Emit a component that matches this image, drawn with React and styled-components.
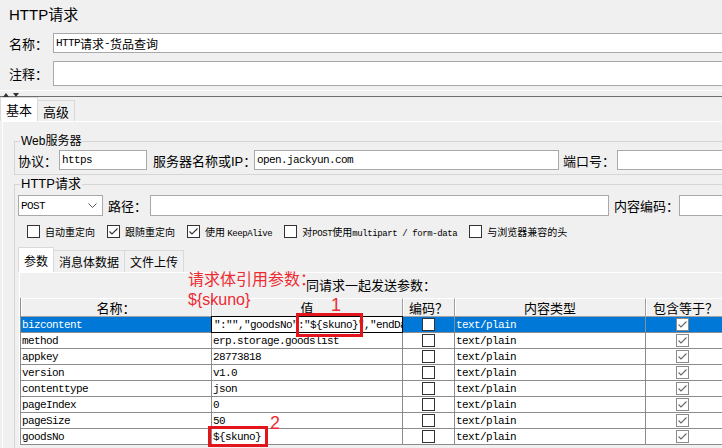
import React from "react";
import styled, { createGlobalStyle } from "styled-components";

const UI = `"Liberation Sans", "Noto Sans CJK SC", sans-serif`;
const MONO = `"Liberation Mono", "Noto Sans CJK SC", monospace`;

const GlobalStyle = createGlobalStyle`
  html, body { margin: 0; padding: 0; background: #f0f0f0; }
  * { box-sizing: border-box; }
`;

const params = [
  { name: "bizcontent", value: '":"","goodsNo":"${skuno}","endDa', selected: true },
  { name: "method", value: "erp.storage.goodslist" },
  { name: "appkey", value: "28773818" },
  { name: "version", value: "v1.0" },
  { name: "contenttype", value: "json" },
  { name: "pageIndex", value: "0" },
  { name: "pageSize", value: "50" },
  { name: "goodsNo", value: "${skuno}" },
];

function CheckBox({ checked, $muted }) {
  return (
    <Box $muted={$muted}>
      {checked && (
        <svg width="11" height="11" viewBox="0 0 11 11">
          <polyline points="1.5,5.5 4,8 9.5,2.5" fill="none" stroke="currentColor" strokeWidth="1.1" />
        </svg>
      )}
    </Box>
  );
}

export default function App() {
  const options = [
    { label: <>自动重定向</>, checked: false },
    { label: <>跟随重定向</>, checked: true },
    { label: <>使用 <Latin>KeepAlive</Latin></>, checked: true },
    { label: <>对<Latin>POST</Latin>使用<Latin>multipart / form-data</Latin></>, checked: false },
    { label: <>与浏览器兼容的头</>, checked: false },
  ];

  return (
    <>
      <GlobalStyle />
      <Page>
        <Sheet>
          <Title>HTTP请求</Title>
          <FieldRow $h={20}>
            <Label $w={44}>名称：</Label>
            <TextBox>HTTP<Han>请求</Han>-<Han>货品查询</Han></TextBox>
          </FieldRow>
          <FieldRow $h={25} $mt={8}>
            <Label $w={44}>注释：</Label>
            <TextBox />
          </FieldRow>
          <Splitter>
            <svg width="20" height="5" viewBox="0 0 20 5">
              <polygon points="3,5 6,1 9,5" fill="#333" />
              <polygon points="13,1 19,1 16,5" fill="#333" />
            </svg>
          </Splitter>

          <TabBar>
            <Tab $active>基本</Tab>
            <Tab>高级</Tab>
          </TabBar>

          <Panel>
            <Group>
              <Legend>Web服务器</Legend>
              <GroupRow $h={20}>
                <Label $w={41}>协议：</Label>
                <TextBox $w={88}>https</TextBox>
                <Label $w={101} $ml={6}>服务器名称或IP：</Label>
                <TextBox $w={305}>open.jackyun.com</TextBox>
                <Label $w={54} $ml={4}>端口号：</Label>
                <TextBox />
              </GroupRow>
            </Group>

            <Group $mt={2} $open>
              <Legend $big>HTTP请求</Legend>
              <GroupRow $h={21}>
                <Select>
                  POST
                  <svg width="9" height="5" viewBox="0 0 9 5">
                    <polyline points="0.5,0.5 4.5,4.5 8.5,0.5" fill="none" stroke="#555" strokeWidth="1" />
                  </svg>
                </Select>
                <Label $w={42} $ml={5}>路径：</Label>
                <TextBox $w={459} />
                <Label $w={65} $ml={5}>内容编码：</Label>
                <TextBox />
              </GroupRow>

              <OptionRow>
                {options.map((o, i) => (
                  <Option key={i}>
                    <CheckBox checked={o.checked} />
                    <OptionText>{o.label}</OptionText>
                  </Option>
                ))}
              </OptionRow>

              <SubTabBar>
                <SubTab $active>参数</SubTab>
                <SubTab>消息体数据</SubTab>
                <SubTab>文件上传</SubTab>
              </SubTabBar>

              <SubPanel>
                <TableWrap>
                  <Caption>同请求一起发送参数：</Caption>
                  <Grid>
                    <HeadCell>名称：</HeadCell>
                    <HeadCell>值</HeadCell>
                    <HeadCell>编码？</HeadCell>
                    <HeadCell>内容类型</HeadCell>
                    <HeadCell>包含等于？</HeadCell>
                    {params.map((p) => (
                      <React.Fragment key={p.name}>
                        <Cell $sel={p.selected}>{p.name}</Cell>
                        {p.selected ? <EditCell>{p.value}</EditCell> : <Cell>{p.value}</Cell>}
                        <Cell $sel={p.selected} $center>
                          <CheckBox checked={false} />
                        </Cell>
                        <Cell $sel={p.selected}>text/plain</Cell>
                        <Cell $sel={p.selected} $center $last>
                          <CheckBox checked $muted />
                        </Cell>
                      </React.Fragment>
                    ))}
                  </Grid>
                </TableWrap>
              </SubPanel>
            </Group>
          </Panel>
        </Sheet>

        <Note>
          请求体引用参数：
          <br />
          {"${skuno}"}
        </Note>
        <Marker $x={296} $y={313} $w={67} $h={24} />
        <MarkerNum $x={331} $y={295}>1</MarkerNum>
        <Marker $x={208} $y={426} $w={60} $h={21} />
        <MarkerNum $x={270} $y={413}>2</MarkerNum>
      </Page>
    </>
  );
}

const Page = styled.div`
  position: relative;
  width: 722px;
  height: 448px;
  overflow: hidden;
  background: #f0f0f0;
  font-family: ${UI};
  color: #000;
`;

const Sheet = styled.div`
  width: 780px;
`;

const Title = styled.div`
  height: 33px;
  padding: 5px 0 0 9px;
  font-size: 15px;
  line-height: 20px;
`;

const FieldRow = styled.div`
  display: flex;
  align-items: center;
  height: ${(p) => p.$h}px;
  margin-top: ${(p) => p.$mt || 0}px;
  padding-left: 9px;
`;

const Label = styled.span`
  flex: none;
  width: ${(p) => p.$w}px;
  margin-left: ${(p) => p.$ml || 0}px;
  font-size: 13px;
  white-space: nowrap;
`;

const TextBox = styled.div`
  flex: ${(p) => (p.$w ? "none" : "1")};
  width: ${(p) => (p.$w ? `${p.$w}px` : "auto")};
  height: 100%;
  display: flex;
  align-items: center;
  padding: 0 2px;
  background: #fff;
  border: 1px solid #a9a9a9;
  font-family: ${MONO};
  font-size: 11px;
  letter-spacing: -0.6px;
  white-space: nowrap;
  overflow: hidden;
`;

const Han = styled.span`
  font-family: "Noto Sans CJK SC", sans-serif;
  font-size: 12px;
  letter-spacing: 0;
`;

const Latin = styled.span`
  font-family: "Liberation Mono", monospace;
  font-size: 9px;
  letter-spacing: -0.4px;
`;

const Splitter = styled.div`
  height: 7px;
  margin-top: 4px;
  border-top: 1px solid #fff;
  border-bottom: 1px solid #6e6e6e;
  display: flex;
  align-items: flex-end;
  svg {
    display: block;
    margin-bottom: -1px;
  }
`;

const TabBar = styled.div`
  display: flex;
  align-items: flex-end;
  height: 24px;
`;

const Tab = styled.div`
  height: ${(p) => (p.$active ? 24 : 21)}px;
  padding: 0 5px;
  margin-right: -1px;
  display: flex;
  align-items: center;
  font-size: 13px;
  background: ${(p) => (p.$active ? "#fff" : "#f0f0f0")};
  border: 1px solid #d9d9d9;
  border-bottom: none;
  position: relative;
  z-index: ${(p) => (p.$active ? 1 : 0)};
`;

const Panel = styled.div`
  margin-left: 2px;
  padding: 12px 0 0 11px;
  border-top: 1px solid #fff;
  border-left: 1px solid #fff;
`;

const Group = styled.fieldset`
  margin: ${(p) => p.$mt || 0}px 0 0 0;
  padding: 2px 0 ${(p) => (p.$open ? 20 : 4)}px 3px;
  border: 1px solid #d5d5d5;
  min-width: 0;
`;

const Legend = styled.legend`
  margin-left: 2px;
  padding: 0 1px;
  font-size: ${(p) => (p.$big ? 13 : 12)}px;
  line-height: 14px;
`;

const GroupRow = styled.div`
  display: flex;
  align-items: center;
  height: ${(p) => p.$h}px;
  margin-top: ${(p) => (p.$h === 21 ? 2 : 0)}px;
`;

const Select = styled.div`
  flex: none;
  width: 85px;
  height: 100%;
  display: flex;
  align-items: center;
  justify-content: space-between;
  padding: 0 5px 0 2px;
  background: #fff;
  border: 1px solid #a9a9a9;
  font-family: ${MONO};
  font-size: 11px;
  letter-spacing: -0.6px;
`;

const OptionRow = styled.div`
  display: flex;
  align-items: center;
  gap: 12px;
  height: 19px;
  margin-top: 6px;
  padding-left: 9px;
`;

const Option = styled.div`
  display: flex;
  align-items: center;
  gap: 5px;
`;

const OptionText = styled.span`
  font-family: "Noto Sans CJK SC", sans-serif;
  font-size: 10px;
  white-space: nowrap;
`;

const Box = styled.span`
  flex: none;
  width: 13px;
  height: 13px;
  display: inline-flex;
  align-items: center;
  justify-content: center;
  background: #fff;
  border: 1px solid ${(p) => (p.$muted ? "#8a8a8a" : "#333")};
  color: ${(p) => (p.$muted ? "#666" : "#333")};
`;

const SubTabBar = styled.div`
  display: flex;
  align-items: flex-end;
  height: 25px;
  margin-top: 6px;
`;

const SubTab = styled.div`
  height: ${(p) => (p.$active ? 25 : 22)}px;
  padding: 0 5px;
  margin-right: -1px;
  display: flex;
  align-items: center;
  font-size: 12px;
  background: ${(p) => (p.$active ? "#fff" : "#f0f0f0")};
  border: 1px solid #d9d9d9;
  border-bottom: none;
  position: relative;
  z-index: ${(p) => (p.$active ? 1 : 0)};
`;

const SubPanel = styled.div`
  margin-left: 1px;
  border-top: 1px solid #fff;
  border-left: 1px solid #fff;
`;

const TableWrap = styled.div`
  width: 702px;
`;

const Caption = styled.div`
  height: 25px;
  line-height: 25px;
  text-align: center;
  font-size: 13px;
`;

const Grid = styled.div`
  display: grid;
  grid-template-columns: 191px 191px 52px 191px 80px;
  width: 706px;
  border-left: 1px solid #8c8c8c;
`;

const HeadCell = styled.div`
  height: 19px;
  display: flex;
  align-items: center;
  justify-content: center;
  font-size: 13px;
  background: #f0f0f0;
  border-top: 1px solid #fff;
  border-right: 1px solid #a0a0a0;
  border-bottom: 1px solid #a0a0a0;
  box-shadow: inset 1px 0 #fff;
`;

const Cell = styled.div`
  height: 16px;
  display: flex;
  align-items: center;
  justify-content: ${(p) => (p.$center ? "center" : "flex-start")};
  padding-left: ${(p) => (p.$center ? 0 : 1)}px;
  padding-right: ${(p) => (p.$last ? 6 : 0)}px;
  background: ${(p) => (p.$sel ? "#0078d7" : "#fff")};
  color: ${(p) => (p.$sel ? "#fff" : "#000")};
  border-right: 1px solid #8c8c8c;
  border-bottom: 1px solid #8c8c8c;
  font-family: ${MONO};
  font-size: 11px;
  letter-spacing: -0.6px;
  white-space: nowrap;
  overflow: hidden;
`;

const EditCell = styled(Cell)`
  background: #fff;
  color: #000;
  border: 1px solid #000;
  margin: -1px 0 0 -1px;
  height: 17px;
  padding-left: 2px;
`;

const Note = styled.div`
  position: absolute;
  left: 188px;
  top: 270px;
  font-size: 16px;
  line-height: 20px;
  color: #ee2b33;
  white-space: nowrap;
`;

const Marker = styled.div`
  position: absolute;
  left: ${(p) => p.$x}px;
  top: ${(p) => p.$y}px;
  width: ${(p) => p.$w}px;
  height: ${(p) => p.$h}px;
  border: 3px solid #e3141c;
`;

const MarkerNum = styled.div`
  position: absolute;
  left: ${(p) => p.$x}px;
  top: ${(p) => p.$y}px;
  font-size: 18px;
  line-height: 20px;
  color: #ee2b33;
`;
